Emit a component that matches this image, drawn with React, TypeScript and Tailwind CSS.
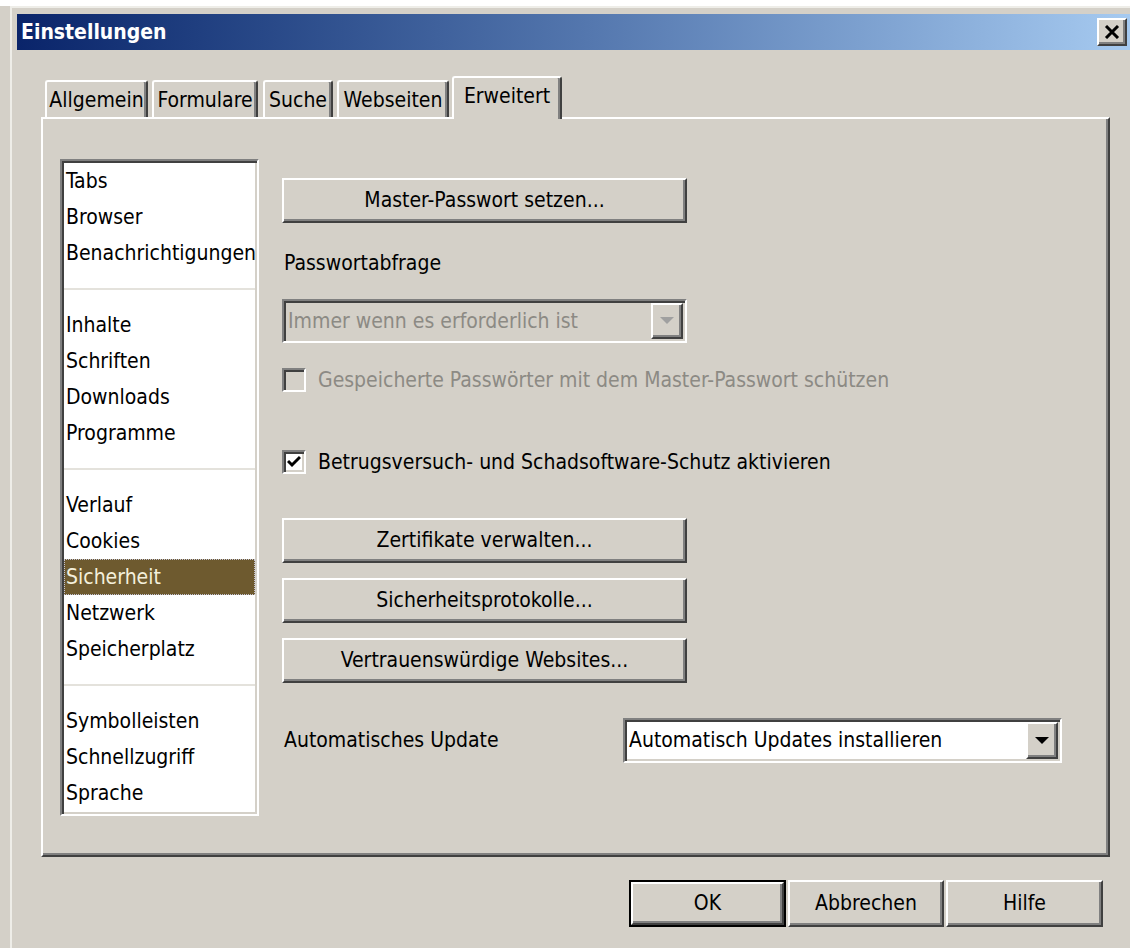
import React from 'react';

// classic 3D edges, doubled for the large dialog scale
const raised =
  'border-2 border-t-white border-l-white border-r-[#404040] border-b-[#404040] shadow-[inset_-2px_-2px_0_#808080]';
const sunken =
  'border-2 border-t-[#808080] border-l-[#808080] border-r-white border-b-white shadow-[inset_2px_2px_0_#404040,inset_-2px_-2px_0_#d4d0c8]';

type Tab = { label: string; className: string; active?: boolean };

const tabs: Tab[] = [
  { label: 'Allgemein', className: 'ml-[4px] w-[103px]' },
  { label: 'Formulare', className: 'ml-[4px] w-[106px]' },
  { label: 'Suche', className: 'ml-[5px] w-[70px]' },
  { label: 'Webseiten', className: 'ml-[4px] w-[112px]' },
  { label: 'Erweitert', className: 'ml-[3px] w-[110px]', active: true },
];

// null marks a separator row
const categories: (string | null)[] = [
  'Tabs',
  'Browser',
  'Benachrichtigungen',
  null,
  'Inhalte',
  'Schriften',
  'Downloads',
  'Programme',
  null,
  'Verlauf',
  'Cookies',
  'Sicherheit',
  'Netzwerk',
  'Speicherplatz',
  null,
  'Symbolleisten',
  'Schnellzugriff',
  'Sprache',
];

const CloseButton = () => (
  <div className={`w-[30px] h-[28px] bg-[#d4d0c8] flex items-center justify-center mt-[4px] ${raised}`}>
    <svg width="16" height="14" viewBox="0 0 16 14">
      <path d="M2 1 L14 13 M14 1 L2 13" stroke="#000" strokeWidth="3" />
    </svg>
  </div>
);

const PushButton: React.FC<{ label: string; className?: string }> = ({ label, className = '' }) => (
  <button className={`bg-[#d4d0c8] flex items-center justify-center leading-none ${raised} ${className}`}>
    {label}
  </button>
);

const ArrowButton: React.FC<{ disabled?: boolean }> = ({ disabled }) => (
  <div className={`w-[32px] h-full bg-[#d4d0c8] flex items-center justify-center ${raised}`}>
    <svg width="14" height="8" viewBox="0 0 14 8">
      <path d="M0 0 H14 L7 7 Z" fill={disabled ? '#a0a0a0' : '#000'} />
    </svg>
  </div>
);

const Checkbox: React.FC<{ checked?: boolean; disabled?: boolean; label: string }> = ({ checked, disabled, label }) => (
  <div className="h-[30px] flex items-center">
    <div className={`w-[24px] h-[24px] flex items-center justify-center ${sunken} ${disabled ? 'bg-[#d4d0c8]' : 'bg-white'}`}>
      {checked && (
        <svg width="14" height="14" viewBox="0 0 14 14">
          <path d="M1 6 L5 10 L13 2" stroke="#000" strokeWidth="3" fill="none" />
        </svg>
      )}
    </div>
    <span className={`ml-[12px] leading-none ${disabled ? 'text-[#8c8a84]' : ''}`}>{label}</span>
  </div>
);

const CategoryList = () => (
  <div className={`w-[199px] h-[657px] bg-white flex flex-col ${sunken}`}>
    <div className="pt-[2px] px-[2px]">
      {categories.map((item, i) =>
        item === null ? (
          <div key={i} className="h-[36px] flex items-center">
            <div className="w-full h-[2px] bg-[#e4e2dc]" />
          </div>
        ) : item === 'Sicherheit' ? (
          <div
            key={i}
            className="h-[36px] flex items-center pl-[2px] leading-none bg-[#6e5a2f] text-[#f4f0dc] outline-1 outline-dotted outline-[#c4c4d4] -outline-offset-1"
          >
            {item}
          </div>
        ) : (
          <div key={i} className="h-[36px] flex items-center pl-[2px] leading-none">
            {item}
          </div>
        )
      )}
    </div>
  </div>
);

export default function App() {
  return (
    <div className="w-[1130px] h-[948px] overflow-hidden bg-[#d4d0c8] text-[21px] text-black font-['DejaVu_Sans_Condensed','Liberation_Sans',sans-serif]">
      <div className="h-[6px] bg-white" />
      <div className="ml-[10px] h-[942px] border-l-2 border-t-2 border-[#eeede8] pl-[5px] pt-[6px]">
        {/* title bar */}
        <div className="w-[1113px] h-[36px] bg-linear-to-r from-[#0a246a] to-[#a6caf0] flex justify-between pl-[4px] pr-[3px]">
          <span className="text-white font-bold leading-[36px]">Einstellungen</span>
          <CloseButton />
        </div>

        <div className="ml-[24px] mt-[26px] w-[1069px]">
          {/* tab strip */}
          <div className="h-[41px] flex items-end">
            {tabs.map((t) =>
              t.active ? (
                <div
                  key={t.label}
                  className={`relative z-10 -mb-[2px] h-[43px] bg-[#d4d0c8] border-t-2 border-l-2 border-r-2 border-t-white border-l-white border-r-[#404040] rounded-t-[3px] shadow-[inset_-2px_0_0_#808080] flex items-start justify-center pt-[8px] leading-none ${t.className}`}
                >
                  {t.label}
                </div>
              ) : (
                <div
                  key={t.label}
                  className={`h-[37px] pt-[2px] border-t-2 border-l-2 border-r-2 border-t-white border-l-white border-r-[#404040] rounded-t-[3px] shadow-[inset_-2px_0_0_#808080] flex items-center justify-center leading-none ${t.className}`}
                >
                  {t.label}
                </div>
              )
            )}
          </div>

          {/* tab page */}
          <div className={`h-[740px] pl-[17px] pt-[40px] ${raised}`}>
            <div className="flex">
              <CategoryList />

              <div className="ml-[23px] flex flex-col">
                <PushButton label="Master-Passwort setzen..." className="mt-[19px] w-[405px] h-[45px]" />

                <div className="mt-[25px] ml-[2px] h-[30px] flex items-center leading-none">Passwortabfrage</div>

                <div className={`mt-[21px] w-[405px] h-[44px] bg-[#d4d0c8] flex items-stretch ${sunken}`}>
                  <div className="flex-1 flex items-center pl-[4px] text-[#8c8a84] leading-none">
                    Immer wenn es erforderlich ist
                  </div>
                  <div className="p-[2px]">
                    <ArrowButton disabled />
                  </div>
                </div>

                <div className="mt-[22px]">
                  <Checkbox disabled label="Gespeicherte Passwörter mit dem Master-Passwort schützen" />
                </div>
                <div className="mt-[52px]">
                  <Checkbox checked label="Betrugsversuch- und Schadsoftware-Schutz aktivieren" />
                </div>

                <PushButton label="Zertifikate verwalten..." className="mt-[41px] w-[405px] h-[45px]" />
                <PushButton label="Sicherheitsprotokolle..." className="mt-[15px] w-[405px] h-[45px]" />
                <PushButton label="Vertrauenswürdige Websites..." className="mt-[15px] w-[405px] h-[45px]" />

                <div className="mt-[35px] h-[45px] flex items-center">
                  <div className="w-[341px] pl-[2px] leading-none">Automatisches Update</div>
                  <div className={`w-[439px] h-[45px] bg-white flex items-stretch ${sunken}`}>
                    <div className="flex-1 flex items-center pl-[4px] leading-none">Automatisch Updates installieren</div>
                    <div className="p-[2px]">
                      <ArrowButton />
                    </div>
                  </div>
                </div>
              </div>
            </div>
          </div>

          {/* dialog buttons */}
          <div className="mt-[23px] pr-[7px] flex justify-end gap-[2px]">
            <div className="border-2 border-black">
              <PushButton label="OK" className="w-[153px] h-[43px]" />
            </div>
            <PushButton label="Abbrechen" className="w-[156px] h-[47px]" />
            <PushButton label="Hilfe" className="w-[157px] h-[47px]" />
          </div>
        </div>
      </div>
    </div>
  );
}
